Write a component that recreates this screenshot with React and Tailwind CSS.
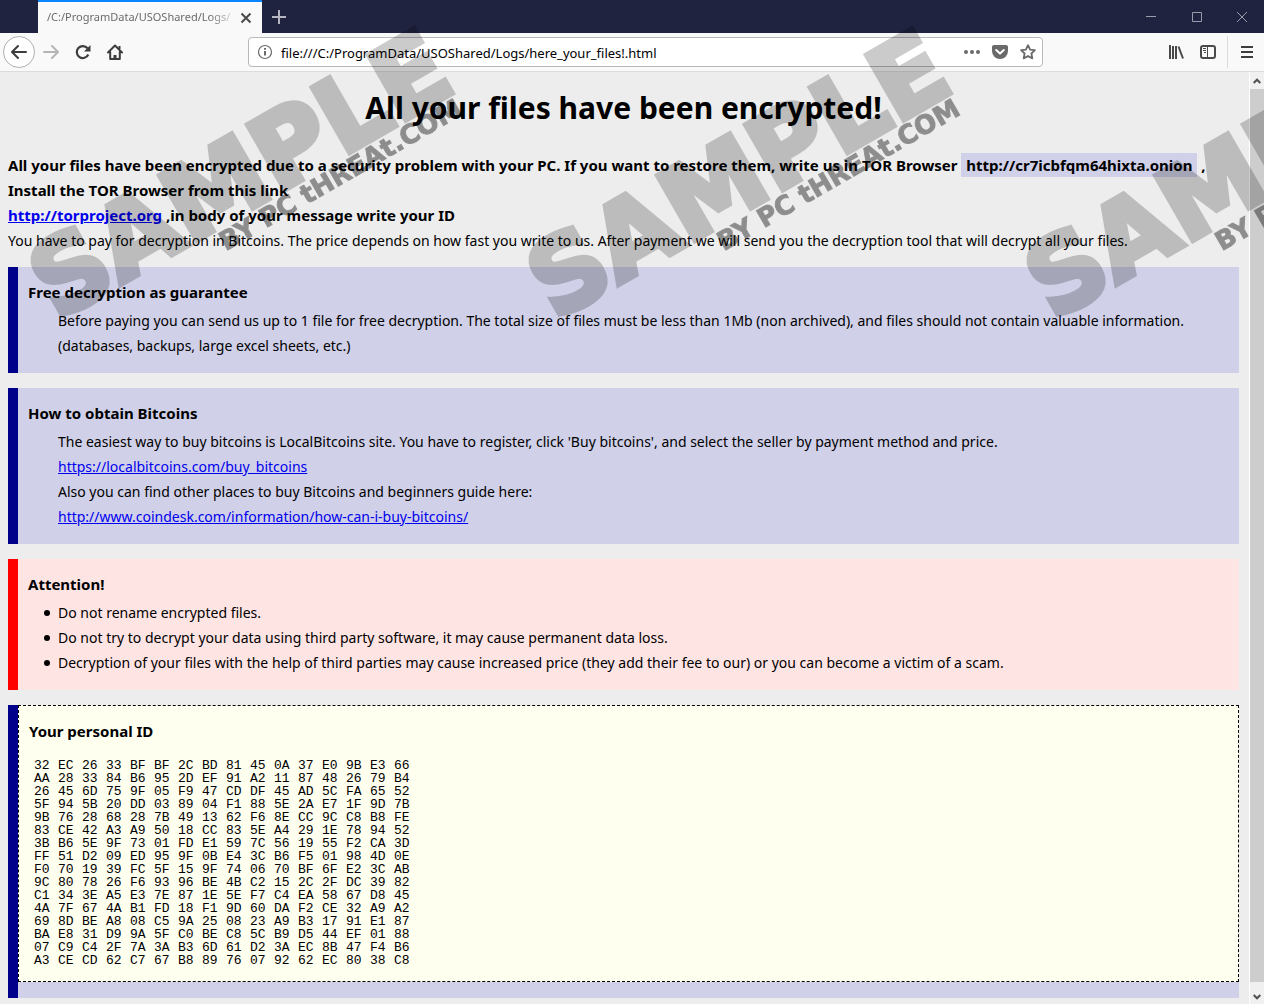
const ID_ROWS = [
  "32 EC 26 33 BF BF 2C BD 81 45 0A 37 E0 9B E3 66",
  "AA 28 33 84 B6 95 2D EF 91 A2 11 87 48 26 79 B4",
  "26 45 6D 75 9F 05 F9 47 CD DF 45 AD 5C FA 65 52",
  "5F 94 5B 20 DD 03 89 04 F1 88 5E 2A E7 1F 9D 7B",
  "9B 76 28 68 28 7B 49 13 62 F6 8E CC 9C C8 B8 FE",
  "83 CE 42 A3 A9 50 18 CC 83 5E A4 29 1E 78 94 52",
  "3B B6 5E 9F 73 01 FD E1 59 7C 56 19 55 F2 CA 3D",
  "FF 51 D2 09 ED 95 9F 0B E4 3C B6 F5 01 98 4D 0E",
  "F0 70 19 39 FC 5F 15 9F 74 06 70 BF 6F E2 3C AB",
  "9C 80 78 26 F6 93 96 BE 4B C2 15 2C 2F DC 39 82",
  "C1 34 3E A5 E3 7E 87 1E 5E F7 C4 EA 58 67 D8 45",
  "4A 7F 67 4A B1 FD 18 F1 9D 60 DA F2 CE 32 A9 A2",
  "69 8D BE A8 08 C5 9A 25 08 23 A9 B3 17 91 E1 87",
  "BA E8 31 D9 9A 5F C0 BE C8 5C B9 D5 44 EF 01 88",
  "07 C9 C4 2F 7A 3A B3 6D 61 D2 3A EC 8B 47 F4 B6",
  "A3 CE CD 62 C7 67 B8 89 76 07 92 62 EC 80 38 C8",
];

const WARNINGS = [
  "Do not rename encrypted files.",
  "Do not try to decrypt your data using third party software, it may cause permanent data loss.",
  "Decryption of your files with the help of third parties may cause increased price (they add their fee to our) or you can become a victim of a scam.",
];

function TitleBar() {
  return (
    <header className="flex h-[33px] shrink-0 bg-[#202340] pl-[38px]">
      <div className="flex w-56 items-center border-t-2 border-[#0a84ff] bg-[#f9f9f9] pl-[9px] pr-2">
        <span className="min-w-0 flex-1 overflow-hidden whitespace-nowrap font-['Noto_Sans'] text-[11px] text-[#6b6b6b] [mask-image:linear-gradient(to_right,black_85%,transparent)]">
          /C:/ProgramData/USOShared/Logs/
        </span>
        <button aria-label="Close tab" className="flex size-4 items-center justify-center">
          <svg width="12" height="12" viewBox="0 0 12 12" stroke="#4a4a4a" strokeWidth="2">
            <path d="M1.500 1.500l9 9M10.500 1.500l-9 9" />
          </svg>
        </button>
      </div>
      <button aria-label="New tab" className="flex w-[34px] items-center justify-center">
        <svg width="14" height="14" viewBox="0 0 14 14" stroke="#b5b6c2" strokeWidth="2">
          <path d="M7 0v14M0 7h14" />
        </svg>
      </button>
      <div className="ml-auto flex">
        <button aria-label="Minimize" className="flex w-[46px] items-center justify-center">
          <svg width="10" height="10" stroke="#9a9bab" fill="none">
            <path d="M0 4.500h10" />
          </svg>
        </button>
        <button aria-label="Maximize" className="flex w-[46px] items-center justify-center">
          <svg width="10" height="10" stroke="#9a9bab" fill="none">
            <path d="M.5.5h9v9h-9z" />
          </svg>
        </button>
        <button aria-label="Close window" className="flex w-[44px] items-center justify-center">
          <svg width="10" height="10" stroke="#9a9bab" fill="none">
            <path d="M0 0l10 10M10 0L0 10" />
          </svg>
        </button>
      </div>
    </header>
  );
}

function ToolBar() {
  return (
    <nav className="flex h-[39px] shrink-0 items-center border-b border-[#dcdcdc] bg-[#f9f9f9] pl-[3px]">
      <button aria-label="Back" className="flex size-8 items-center justify-center rounded-full border border-[#b1b1b1] bg-white">
        <svg width="16" height="16" viewBox="0 0 16 16" fill="none" stroke="#3d3d3d" strokeWidth="2" strokeLinecap="round" strokeLinejoin="round">
          <path d="M15 8H1.500M7 2L1 8l6 6" />
        </svg>
      </button>
      <button aria-label="Forward" className="flex size-8 items-center justify-center">
        <svg width="16" height="16" viewBox="0 0 16 16" fill="none" stroke="#b5b5b5" strokeWidth="2" strokeLinecap="round" strokeLinejoin="round">
          <path d="M1 8h13.500M9 2l6 6-6 6" />
        </svg>
      </button>
      <button aria-label="Reload" className="flex size-8 items-center justify-center">
        <svg width="16" height="16" viewBox="0 0 16 16" fill="none" stroke="#3d3d3d" strokeWidth="2.200">
          <path d="M13.300 10.500A6 6 0 1 1 12.500 4.300" />
          <path d="M15.500 1v6.500H9z" fill="#3d3d3d" stroke="none" />
        </svg>
      </button>
      <button aria-label="Home" className="flex size-8 items-center justify-center">
        <svg width="16" height="16" viewBox="0 0 16 16" fill="none" stroke="#3d3d3d" strokeWidth="2" strokeLinejoin="round" strokeLinecap="round">
          <path d="M1 8.500l7-7 7 7M3.200 8v7h9.600V8" />
          <path d="M8 15v-4" strokeLinecap="butt" strokeWidth="3" />
          <path d="M12.500 2v3" strokeLinecap="butt" />
        </svg>
      </button>

      <div className="mx-[117px] flex h-[30px] min-w-0 flex-1 items-center gap-2 rounded-sm border border-[#b8b8b8] bg-white pl-2 pr-1.5">
        <svg className="shrink-0" width="16" height="16" viewBox="0 0 16 16" fill="none" stroke="#6a6a6a">
          <circle cx="8" cy="8" r="6.500" strokeWidth="1.200" />
          <path d="M8 7v4.500M8 4v1.800" strokeWidth="2" />
        </svg>
        <input
          aria-label="Address"
          defaultValue="file:///C:/ProgramData/USOShared/Logs/here_your_files!.html"
          className="min-w-0 flex-1 bg-transparent pt-[3px] font-['Noto_Sans'] text-[13px] text-black outline-none"
        />
        <div className="flex shrink-0 items-center gap-3">
          <button aria-label="Page actions">
            <svg width="16" height="16" viewBox="0 0 16 16" fill="#6a6a6a">
              <circle cx="2" cy="8" r="2" />
              <circle cx="8" cy="8" r="2" />
              <circle cx="14" cy="8" r="2" />
            </svg>
          </button>
          <button aria-label="Save to Pocket">
            <svg width="16" height="16" viewBox="0 0 16 16">
              <path d="M2 1h12a2 2 0 0 1 2 2v4a8 8 0 0 1-16 0V3a2 2 0 0 1 2-2z" fill="#6a6a6a" />
              <path d="M4.200 6L8 9.600 11.800 6" fill="none" stroke="#fff" strokeWidth="2" strokeLinecap="round" strokeLinejoin="round" />
            </svg>
          </button>
          <button aria-label="Bookmark">
            <svg width="16" height="16" viewBox="0 0 16 16" fill="none" stroke="#6a6a6a" strokeWidth="1.800" strokeLinejoin="round">
              <path d="M8 1.200l2.100 4.400 4.800.6-3.500 3.300.9 4.900L8 12l-4.300 2.400.9-4.900L1.100 6.200l4.800-.6z" />
            </svg>
          </button>
        </div>
      </div>

      <button aria-label="Library" className="flex size-8 items-center justify-center">
        <svg width="16" height="16" viewBox="0 0 16 16" fill="none" stroke="#4a4a4a" strokeWidth="2">
          <path d="M2 1v14M5 2v13M8 2v13M10.500 2.500l4.500 12" />
        </svg>
      </button>
      <button aria-label="Sidebars" className="flex size-8 items-center justify-center">
        <svg width="16" height="16" viewBox="0 0 16 16" fill="none" stroke="#4a4a4a" strokeWidth="2">
          <rect x="1" y="2" width="14" height="12" rx="2" />
          <path d="M7.500 2v12" strokeWidth="1" />
          <path d="M3 4.500h3M3 6.500h3M4 8.500h2" strokeWidth="1" />
        </svg>
      </button>
      <div className="ml-[3px] h-8 w-px bg-[#dcdcdc]" />
      <button aria-label="Menu" className="flex w-9 items-center justify-center pl-0.5">
        <svg width="12" height="12" viewBox="0 0 12 12" stroke="#3d3d3d" strokeWidth="2">
          <path d="M0 1h12M0 6h12M0 11h12" />
        </svg>
      </button>
    </nav>
  );
}

function Card({ title, accent, children }) {
  return (
    <section className={`mb-[15px] border-l-[10px] px-2.5 pb-[15px] pt-[13px] ${accent}`}>
      <h2 className="text-[15px] font-bold leading-[25px]">{title}</h2>
      <div className="mt-[3px] pl-[30px]">{children}</div>
    </section>
  );
}

function ScrollBar() {
  return (
    <div className="flex w-[15px] shrink-0 flex-col border-l border-white bg-[#f0f0f0]">
      <button aria-label="Scroll up" className="flex h-[17px] items-center justify-center">
        <svg width="8" height="6" viewBox="0 0 8 6" fill="none" stroke="#505050" strokeWidth="2">
          <path d="M.7 5L4 1.700 7.300 5" />
        </svg>
      </button>
      <div className="flex-1 bg-[#cdcdcd]" />
      <button aria-label="Scroll down" className="flex h-[22px] items-end justify-center pb-1">
        <svg width="8" height="6" viewBox="0 0 8 6" fill="none" stroke="#505050" strokeWidth="2">
          <path d="M.7 1L4 4.300 7.300 1" />
        </svg>
      </button>
    </div>
  );
}

function Watermark() {
  return (
    <svg aria-hidden="true" className="pointer-events-none absolute inset-0 size-full" fontFamily="DejaVu Sans" fontWeight="700">
      {[57, 555, 1053].map((x) => (
        <g key={x} transform={`translate(${x} 321) rotate(-30)`}>
          <g opacity="0.200">
            <text fontSize="102" stroke="#000" strokeWidth="6">SAMPLE</text>
          </g>
          <g opacity="0.400">
            <text x="181" y="24" fontSize="26" stroke="#000" strokeWidth="1">BY PC tHREAt.COM</text>
          </g>
        </g>
      ))}
    </svg>
  );
}

export default function App() {
  return (
    <div className="relative flex h-screen flex-col overflow-hidden bg-[#ededed] text-black">
      <TitleBar />
      <ToolBar />
      <div className="flex min-h-0 flex-1">
        <main className="min-w-0 flex-1 overflow-hidden pl-2 pr-2.5 font-['Noto_Sans'] text-[14px] leading-[25px]">
          <h1 className="mt-4 text-center text-[30px] font-bold leading-10">All your files have been encrypted!</h1>
          <p className="mt-[25px] text-[15px] font-bold leading-[25px]">
            All your files have been encrypted due to a security problem with your PC. If you want to restore them, write us in TOR Browser{" "}
            <span className="bg-[#d0d0e8] px-[5px] py-0.5">http://cr7icbfqm64hixta.onion</span> ,
            <br />
            Install the TOR Browser from this link
            <br />
            <a href="http://torproject.org" className="text-[#0000ee] underline">http://torproject.org</a> ,in body of your message write your ID
          </p>
          <p className="mb-3.5">
            You have to pay for decryption in Bitcoins. The price depends on how fast you write to us. After payment we will send you the decryption tool that will decrypt all your files.
          </p>

          <Card title="Free decryption as guarantee" accent="border-[#00008b] bg-[#d0d0e8]">
            Before paying you can send us up to 1 file for free decryption. The total size of files must be less than 1Mb (non archived), and files should not contain valuable information.
            <br />
            (databases, backups, large excel sheets, etc.)
          </Card>

          <Card title="How to obtain Bitcoins" accent="border-[#00008b] bg-[#d0d0e8]">
            The easiest way to buy bitcoins is LocalBitcoins site. You have to register, click 'Buy bitcoins', and select the seller by payment method and price.
            <br />
            <a href="https://localbitcoins.com/buy_bitcoins" className="text-[#0000ee] underline">https://localbitcoins.com/buy_bitcoins</a>
            <br />
            Also you can find other places to buy Bitcoins and beginners guide here:
            <br />
            <a href="http://www.coindesk.com/information/how-can-i-buy-bitcoins/" className="text-[#0000ee] underline">
              http://www.coindesk.com/information/how-can-i-buy-bitcoins/
            </a>
          </Card>

          <Card title="Attention!" accent="border-[#ff0000] bg-[#ffe4e4]">
            <ul className="-ml-3.5">
              {WARNINGS.map((text) => (
                <li key={text} className="flex items-center gap-2 before:size-1.5 before:shrink-0 before:rounded-full before:bg-black">
                  {text}
                </li>
              ))}
            </ul>
          </Card>

          <section className="border-l-[10px] border-[#00008b] bg-[#d0d0e8] pb-4">
            <div className="border border-dashed border-black bg-[#ffffef] px-2.5 pb-3.5 pt-[13px]">
              <h2 className="text-[15px] font-bold leading-[25px]">Your personal ID</h2>
              <table className="ml-[5px] mt-[15px] font-['Liberation_Mono'] text-[13px] leading-[13px]">
                <tbody>
                  {ID_ROWS.map((row) => (
                    <tr key={row}>
                      {row.split(" ").map((byte, i) => (
                        <td key={i} className="w-6 min-w-6 p-0">{byte}</td>
                      ))}
                    </tr>
                  ))}
                </tbody>
              </table>
            </div>
          </section>
        </main>
        <ScrollBar />
      </div>
      <Watermark />
    </div>
  );
}
